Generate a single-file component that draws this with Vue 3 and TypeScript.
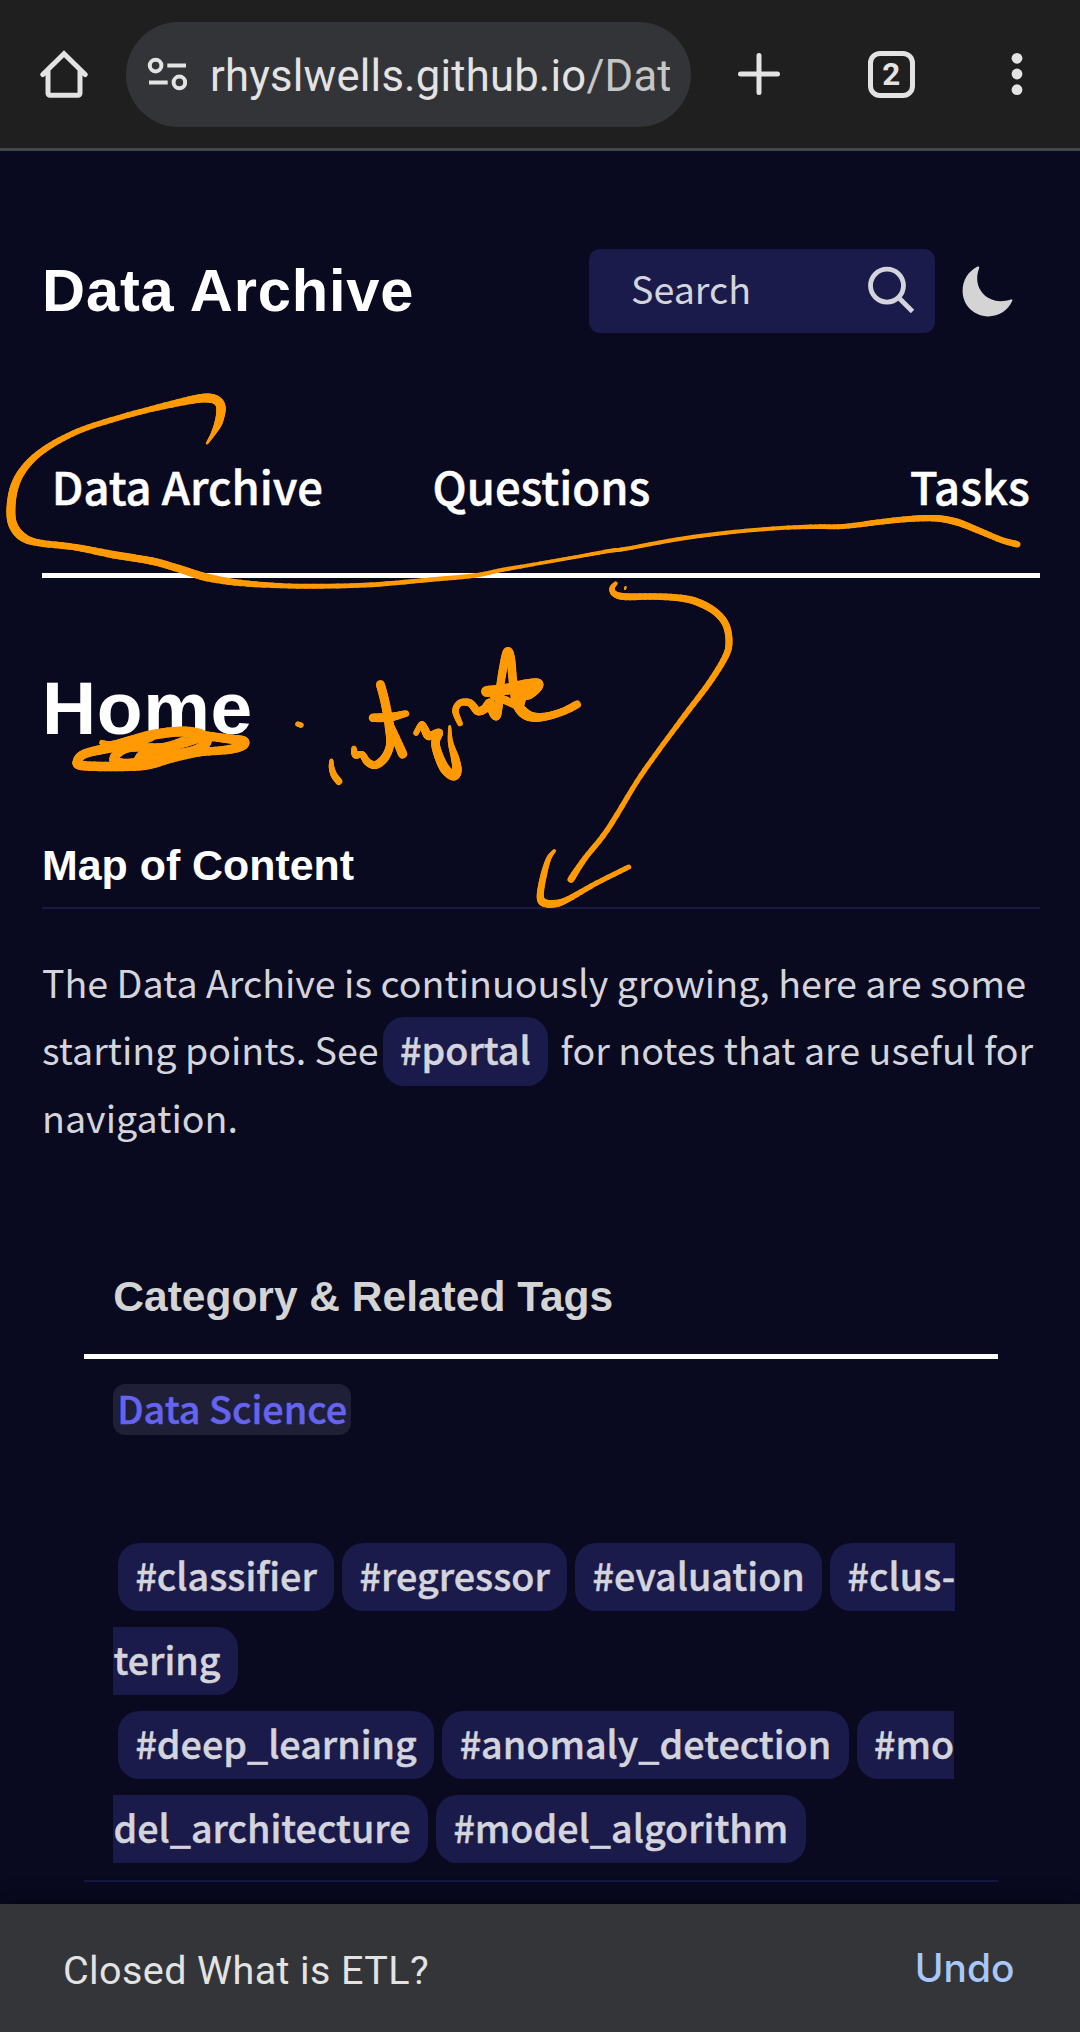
<script setup lang="ts">
interface Tag {
  label: string
  cut?: 'start' | 'end'
}
type InkPoint = [x: number, y: number, width: number]
interface Segment {
  x1: number
  y1: number
  x2: number
  y2: number
  w: number
}

const navItems: string[] = ['Data Archive', 'Questions', 'Tasks']

const tagRows: Tag[][] = [
  [{ label: '#classifier' }, { label: '#regressor' }, { label: '#evaluation' }, { label: '#clus-', cut: 'end' }],
  [{ label: 'tering', cut: 'start' }],
  [{ label: '#deep_learning' }, { label: '#anomaly_detection' }, { label: '#mo', cut: 'end' }],
  [{ label: 'del_architecture', cut: 'start' }, { label: '#model_algorithm' }],
]

// Pen strokes of the markup layer: x, y and nib width at each point.
const loop: InkPoint[] = [
  [207, 443.3, 2], [213.5, 433, 4.5], [218.8, 421.7, 8], [221, 408, 9.5], [217, 400.5, 9], [206.6, 398, 9],
  [189.4, 400.3, 8], [151.5, 409, 6], [117, 418.3, 5.5], [82.6, 429.3, 5.5], [55, 442.7, 6], [34.4, 457.3, 6.5],
  [20.7, 473.3, 7.5], [13.5, 490, 8.5], [10.9, 510, 9], [13, 525, 9], [22, 536.5, 9], [37.9, 542.7, 7],
  [75.8, 547.3, 6.5], [113.6, 554.7, 7.5], [151.5, 561, 7.5], [179, 568.7, 7.5], [206.6, 577.3, 8], [241, 583, 6.5],
  [289.3, 586, 5], [337.5, 586, 4.8], [378.8, 584.3, 4.8], [430.4, 579.7, 4.5], [475, 575.5, 4.5], [502.8, 569.8, 4],
  [540, 563.3, 3.5], [574.4, 557.3, 3.5], [608.9, 551, 4], [626, 548.8, 4], [677.7, 539.3, 4], [726, 532.7, 4],
  [781, 528, 4], [815.5, 526.7, 4.5], [843, 526.5, 5], [877.5, 522.3, 5.5], [908.5, 519, 6], [936, 518.3, 6.5],
  [956.7, 522, 7], [977.3, 530, 6.5], [1001.4, 540, 6], [1017.3, 544.3, 6.5],
]
const arrow: InkPoint[][] = [
  [
    [615.8, 583.3, 3.5], [612, 588.3, 5], [614.7, 594, 6], [625.8, 596.7, 7], [655.4, 596.5, 6.5], [685, 598.7, 7],
    [703.5, 604.7, 7.5], [717, 613.3, 7], [726, 625, 7], [729, 641.7, 7], [725.4, 656.7, 6.5], [709, 683.3, 6],
    [685, 715, 5.5], [659, 750, 5], [636.9, 781.7, 5], [607.3, 830, 5.5], [585, 858.3, 5.5], [571, 879.3, 7],
  ],
  [[625.6, 587, 2], [625, 589, 2]],
  [
    [554.4, 850.7, 3], [548.5, 859, 5], [543.3, 876.7, 6.5], [540.3, 895, 7], [543.4, 902.5, 8], [555.5, 903.6, 7.5],
    [568.4, 899, 6], [596.2, 883.3, 5.2], [628.7, 867, 5],
  ],
]
const underline: InkPoint[][] = [
  [
    [101.8, 742.5, 5], [111, 744.5, 6.5], [130, 740.5, 9], [153, 734.8, 10], [182, 731.5, 10], [201, 735, 11], [206, 742, 11],
    [195, 750, 9], [168, 756, 9.5], [145, 762, 10.5], [126, 764, 10.5], [115.5, 762, 10.5], [116, 755, 9], [130, 747.5, 9],
    [163, 747.5, 9], [190, 740, 11], [202, 736, 10],
  ],
  [
    [200, 735, 9], [228, 738.8, 9], [243, 740.8, 9.5], [242.5, 745.2, 10], [229, 749.5, 9], [199, 752.5, 8], [172, 758, 9],
    [145, 765, 10], [111, 766.5, 9.5], [82, 765.5, 9.5], [77.5, 761.5, 9.5], [85, 753.7, 9], [115, 746.5, 10], [150, 737, 10],
  ],
  [[137, 762, 9], [144, 753.5, 9], [165, 748, 8]],
]
const note: InkPoint[][] = [
  [[297.7, 724, 5], [301.2, 725.2, 5]],
  [[331.4, 760.5, 3.5], [331.6, 767.5, 5.5], [334, 775, 6.5], [338.8, 781.5, 7]],
  [
    [354, 748.5, 5], [355.5, 755, 7], [362, 754.500, 6.5], [367.5, 762, 7.5], [375.5, 765, 8], [384.6, 758, 8.5],
    [390, 745, 8], [389.500, 727, 9.5], [385, 702, 9], [380.4, 684.500, 9],
  ],
  [[386, 716, 7], [394, 734, 8], [402.6, 754, 9.5]],
  [[373, 717.8, 8.5], [390, 717.2, 9], [406, 713.5, 6.5]],
  [
    [416, 733, 5.5], [421.5, 724.5, 6], [425, 730, 8], [429, 736, 8.5], [439, 732.5, 7.5], [435.5, 742, 8.5], [438, 754, 9],
    [445, 769, 10], [453.5, 775.5, 10], [457, 770, 9.5], [455, 758, 8.5], [450.5, 742, 5.5], [449.7, 726.5, 3],
  ],
  [
    [460, 723.5, 5.5], [455.5, 711, 6.5], [460, 703, 6.5], [470, 703, 7.5], [477.5, 711, 8], [484.5, 709, 8.500],
    [490, 703, 9], [493, 712, 9], [496.5, 715.5, 9], [499, 703, 8], [500.5, 684, 8], [504.8, 660, 8.5], [508, 651.5, 9],
    [511, 660, 8.5], [513, 681, 8.5], [517, 703, 10], [524, 713, 11], [533, 717, 9.5], [546, 716.5, 8], [563, 711.5, 7.5], [577, 704.5, 8],
  ],
  [
    [486.5, 691.5, 11], [508, 689, 11], [525, 685.5, 12], [537.5, 683.5, 10], [537, 688, 9.5], [530, 694.5, 8], [522, 695, 12],
    [519, 704, 11],
  ],
  [[494, 696, 8], [506, 700.5, 8], [520, 707, 8]],
]

/** Catmull-Rom interpolation of one pen stroke into short round-capped pieces. */
function trace(points: InkPoint[], steps = 6): Segment[] {
  const out: Segment[] = []
  const at = (i: number): InkPoint => points[Math.max(0, Math.min(points.length - 1, i))]
  const mix = (a: number, b: number, c: number, d: number, t: number): number =>
    0.5 * (2 * b + (c - a) * t + (2 * a - 5 * b + 4 * c - d) * t * t + (3 * b - a - 3 * c + d) * t * t * t)
  let [px, py] = points[0]
  for (let i = 0; i < points.length - 1; i++) {
    const [a, b, c, d] = [at(i - 1), at(i), at(i + 1), at(i + 2)]
    for (let s = 1; s <= steps; s++) {
      const t = s / steps
      const x = mix(a[0], b[0], c[0], d[0], t)
      const y = mix(a[1], b[1], c[1], d[1], t)
      out.push({ x1: px, y1: py, x2: x, y2: y, w: b[2] + (c[2] - b[2]) * t })
      px = x
      py = y
    }
  }
  return out
}

const ink: Segment[] = [loop, ...arrow, ...underline, ...note].flatMap((s) => trace(s))
</script>

<template>
  <div class="screen">
    <header class="browser">
      <svg class="home" viewBox="0 0 48 48" width="48" height="48">
        <path d="M2.8 24.5 24 3.8 45.2 24.5M8 20.5V43.2a2 2 0 0 0 2 2h28a2 2 0 0 0 2-2V20.5" fill="none" stroke="#e3e3e3" stroke-width="5" stroke-linejoin="miter" stroke-linecap="round" />
      </svg>
      <div class="omnibox">
        <svg class="tune" viewBox="0 0 40 34" width="40" height="34">
          <g fill="none" stroke="#e3e3e3" stroke-width="4">
            <circle cx="8.6" cy="8.6" r="5.8" />
            <path d="M20.3 8.6H39M2 25.4H20.7" />
            <circle cx="32.4" cy="25.4" r="5.8" />
          </g>
        </svg>
        <div class="url">rhyslwells.github.io<span class="path">/Dat</span></div>
      </div>
      <svg class="plus" viewBox="0 0 42 42" width="42" height="42">
        <path d="M21 2.5V39.5M2.5 21H39.5" stroke="#e3e3e3" stroke-width="5" stroke-linecap="round" />
      </svg>
      <div class="tabs">2</div>
      <svg class="menu" viewBox="0 0 12 44" width="12" height="44">
        <g fill="#e3e3e3"><circle cx="6" cy="6.3" r="5.4" /><circle cx="6" cy="22" r="5.4" /><circle cx="6" cy="37.7" r="5.4" /></g>
      </svg>
    </header>

    <main class="page">
      <div class="top">
        <h2 class="site">Data Archive</h2>
        <div class="search">
          <span>Search</span>
          <svg viewBox="0 0 48 48" width="48" height="48">
            <g fill="none" stroke="#d4d4dc" stroke-width="4.8"><circle cx="20" cy="19.6" r="16.5" /><path d="M32 32 45.5 45.5" /></g>
          </svg>
        </div>
        <svg class="moon" viewBox="0 0 51 51" width="51" height="51">
          <path d="M15.6 .6C6 5.5 .6 14.3 .6 25.1.6 39.3 12 50.4 26 50.4c11 0 20-6 24.3-15.6.5-1.3-.3-1.700-1.500-1.200-3.300 1.100-6.800 1.600-10.300 1.600C25.300 35.200 15.200 25 15.200 12.600c0-3.800.7-7.200 1.900-10.400.5-1.300-.3-2-1.500-1.600Z" fill="#d4d4d4" />
        </svg>
      </div>

      <nav class="nav">
        <a v-for="item in navItems" :key="item">{{ item }}</a>
      </nav>

      <h1 class="title">Home</h1>
      <h3 class="section">Map of Content</h3>

      <div class="text">
        <div class="line">The Data Archive is continuously growing, here are some</div>
        <div class="line">starting points. See<span class="tag inline">#portal</span>for notes that are useful for</div>
        <div class="line">navigation.</div>
      </div>

      <section class="table">
        <div class="th">Category &amp; Related Tags</div>
        <div class="td">
          <a class="link">Data Science</a>
          <div class="tags">
            <div v-for="(row, i) in tagRows" :key="i" class="row" :class="{ flush: row[0].cut === 'start' }">
              <span v-for="tag in row" :key="tag.label" class="tag" :class="tag.cut && `cut-${tag.cut}`">{{ tag.label }}</span>
            </div>
          </div>
        </div>
      </section>
    </main>

    <footer class="snackbar">
      <span class="message">Closed What is ETL?</span>
      <span class="undo">Undo</span>
    </footer>

    <svg class="ink" viewBox="0 0 1080 2032" width="1080" height="2032">
      <line v-for="(s, i) in ink" :key="i" :x1="s.x1" :y1="s.y1" :x2="s.x2" :y2="s.y2" :stroke-width="s.w" />
    </svg>
  </div>
</template>

<style>
body {
  background: #09091f;
}
</style>

<style scoped>
.screen {
  position: relative;
  display: flex;
  flex-direction: column;
  width: 1080px;
  height: 2032px;
  overflow: hidden;
  box-sizing: border-box;
  background: #09091f;
  color: #d4d4dc;
  font-family: 'Noto Sans CJK JP', 'Noto Sans', sans-serif;
  font-size: 37.62px;
  white-space: nowrap;
}
.browser {
  flex: none;
  display: flex;
  align-items: center;
  box-sizing: border-box;
  height: 151px;
  padding-left: 39.5px;
  border-bottom: 3px solid #454648;
  background: #1f1f1f;
  font-family: Roboto, sans-serif;
}
.browser > svg,
.tune {
  flex: none;
  display: block;
}
.omnibox {
  flex: none;
  display: flex;
  align-items: center;
  box-sizing: border-box;
  width: 565px;
  height: 105px;
  margin-left: 38.5px;
  padding-left: 21px;
  border-radius: 52.5px;
  background: #333438;
}
.url {
  width: 459.5px;
  margin-left: 23px;
  overflow: hidden;
  color: #e3e3e3;
  font-size: 43.6px;
  letter-spacing: 0.2px;
  line-height: 60px;
  padding-top: 5px;
}
.path {
  color: #c4c7c5;
}
.plus {
  margin-left: 47.3px;
}
.tabs {
  flex: none;
  box-sizing: border-box;
  width: 47px;
  height: 47px;
  margin-left: 87.5px;
  border: 5px solid #e3e3e3;
  border-radius: 12px;
  color: #e3e3e3;
  font-size: 31.4px;
  font-weight: 700;
  line-height: 37px;
  text-align: center;
}
.menu {
  margin-left: 96.5px;
}
.page {
  flex: 1;
  min-height: 0;
  padding: 98px 40px 0 42px;
}
.top {
  display: flex;
  height: 84px;
}
.site,
.title,
.section,
.th {
  margin: 0;
  font-family: 'Liberation Sans', Arial, sans-serif;
  font-weight: 700;
  color: #fff;
}
.site {
  width: 547px;
  font-size: 59.6px;
  letter-spacing: 0.85px;
  line-height: 84px;
}
.search {
  display: flex;
  justify-content: space-between;
  box-sizing: border-box;
  width: 346px;
  height: 84px;
  padding: 0 20.5px 0 42px;
  border-radius: 11px;
  background: #1a1a4b;
  line-height: 77px;
}
.search svg {
  margin-top: 17px;
}
.moon {
  margin: 17px 0 0 27px;
}
.nav {
  display: grid;
  grid-template-columns: 380.9px 477.4px auto;
  box-sizing: border-box;
  height: 245px;
  padding: 112.2px 0 0 9.7px;
  border-bottom: 5px solid #fff;
  color: #fff;
  font-size: 45.35px;
  font-weight: 500;
  line-height: 80px;
  -webkit-text-stroke: 0.5px currentColor;
}
.title {
  margin-top: 79.6px;
  font-size: 75px;
  letter-spacing: 0.6px;
  line-height: 100px;
}
.section {
  box-sizing: border-box;
  height: 80px;
  margin-top: 71.4px;
  border-bottom: 2px solid #1a1a41;
  font-size: 42.9px;
  line-height: 72px;
}
.text {
  margin-top: 39.2px;
}
.line {
  display: flex;
  height: 67.2px;
  line-height: 67.2px;
}
.tag {
  flex: none;
  box-sizing: border-box;
  height: 68.7px;
  padding: 0 17.4px;
  border-radius: 21px;
  background: #1a1a4b;
  font-weight: 500;
  font-size: 37.68px;
  line-height: 63.4px;
  -webkit-text-stroke: 0.45px currentColor;
}
.tag.inline {
  margin: 1.5px 12.5px 0 4px;
}
.table {
  width: 914px;
  margin: 114px 0 0 42px;
  border-bottom: 2px solid #17183f;
}
.th {
  box-sizing: border-box;
  height: 95px;
  padding: 1px 0 0 29.3px;
  border-bottom: 5px solid #fff;
  color: #d4d4d4;
  font-size: 42.5px;
  line-height: 64px;
}
.td {
  box-sizing: border-box;
  height: 521px;
  padding: 25px 0 0 29px;
}
.link {
  display: block;
  box-sizing: border-box;
  width: 238px;
  height: 51.7px;
  padding-left: 4.2px;
  border-radius: 12px;
  background: #1f1f38;
  color: #6464f0;
  font-weight: 500;
  font-size: 37.77px;
  line-height: 48px;
  -webkit-text-stroke: 0.45px currentColor;
}
.tags {
  margin-top: 107.3px;
}
.row {
  display: flex;
  gap: 8px;
  height: 84px;
  padding-left: 5px;
}
.row.flush {
  padding-left: 0;
}
.cut-start {
  padding-left: 0.5px;
  border-top-left-radius: 0;
  border-bottom-left-radius: 0;
}
.cut-end {
  padding-right: 0;
  border-top-right-radius: 0;
  border-bottom-right-radius: 0;
}
.snackbar {
  flex: none;
  display: flex;
  justify-content: space-between;
  box-sizing: border-box;
  height: 128px;
  padding: 0 65.5px 0 63px;
  background: #343538;
  box-shadow: 0 -4px 20px rgba(0, 0, 0, 0.25);
  color: #e3e3e3;
}
.message {
  font-family: Roboto, sans-serif;
  font-size: 39.5px;
  letter-spacing: 0.4px;
  line-height: 134px;
}
.undo {
  color: #a8c7fa;
  font-family: Inter, sans-serif;
  font-size: 38.9px;
  font-weight: 500;
  line-height: 127px;
}
.ink {
  position: absolute;
  top: 0;
  left: 0;
  pointer-events: none;
  stroke: #ff9a05;
  stroke-linecap: round;
}
</style>
